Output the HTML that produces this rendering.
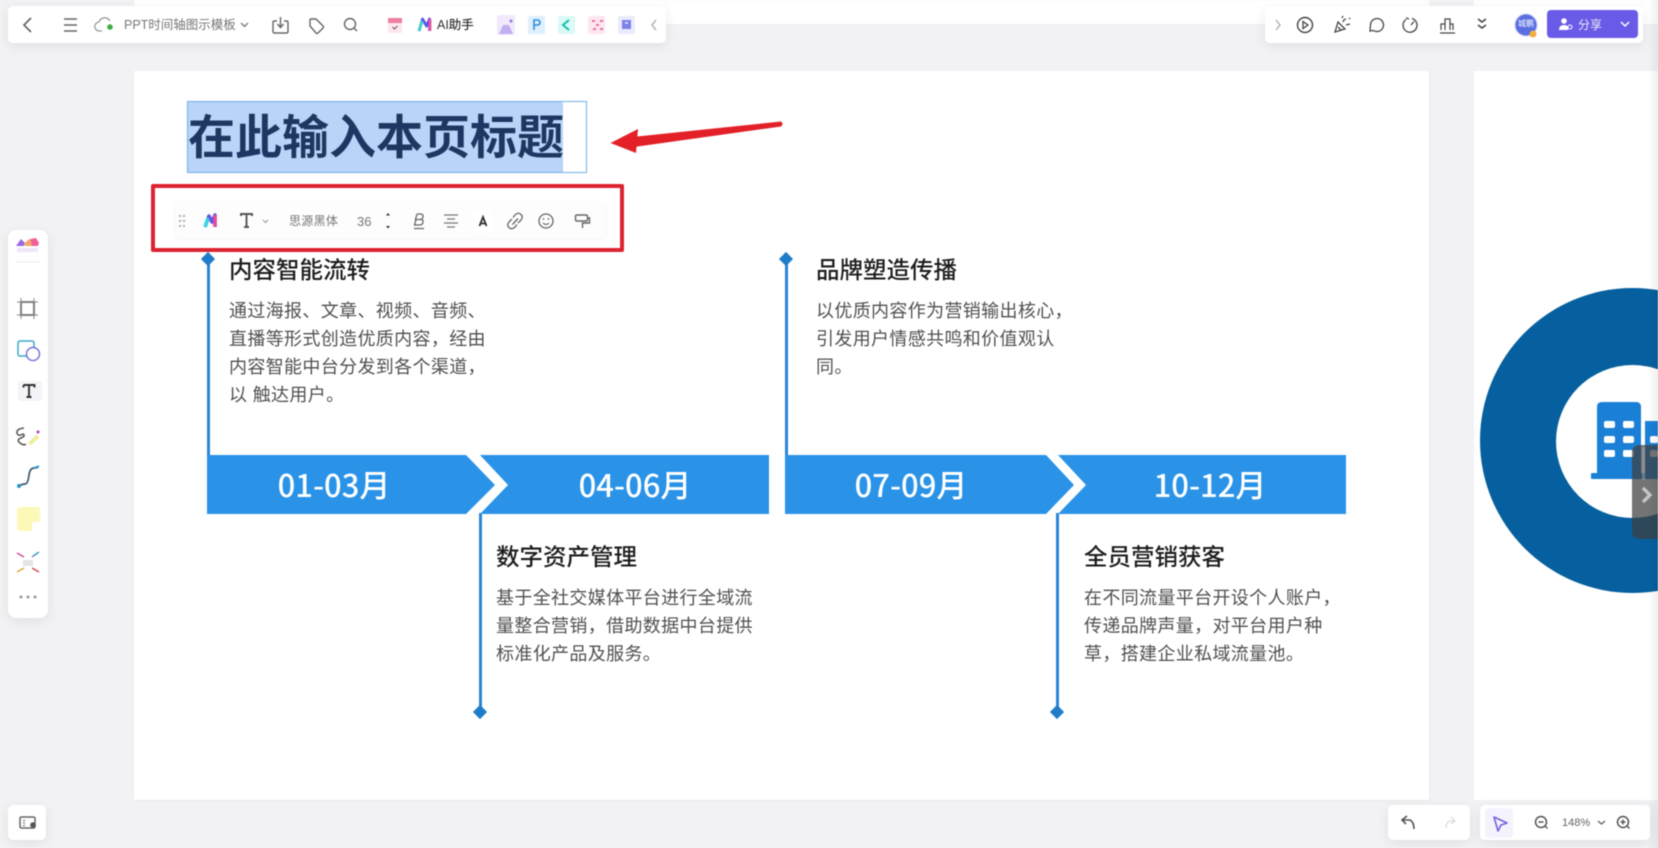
<!DOCTYPE html>
<html lang="zh-CN"><head><meta charset="utf-8"><title>PPT时间轴图示模板</title>
<style>
*{box-sizing:border-box}
html,body{margin:0;padding:0;background:#f2f2f5}
body{width:1658px;height:848px;overflow:hidden;position:relative;font-family:"Liberation Sans","Noto Sans CJK SC",sans-serif}
#w{position:absolute;left:0;top:0;width:1658px;height:848px;overflow:hidden;background:#f2f2f5;filter:blur(.45px)}
.a{position:absolute}
.t{position:absolute;white-space:nowrap;line-height:1}
.panel{position:absolute;background:#fff;border-radius:5px;box-shadow:0 3px 12px rgba(0,0,0,.08)}
svg{position:absolute;overflow:visible;fill:none}
.h{position:absolute;white-space:nowrap;font-size:23.5px;line-height:30px;font-weight:500;color:#1c1c1c}
.b{position:absolute;white-space:nowrap;font-size:18px;line-height:28px;letter-spacing:.35px;color:#505050}
.lab{position:absolute;top:464px;width:200px;text-align:center;color:#fff;font-family:"Noto Sans CJK SC",sans-serif;font-size:31px;line-height:40px;font-weight:500}
.ln{position:absolute;width:2.5px;background:#2a85d8}
.d{position:absolute;width:10px;height:10px;background:#1f7cc9;transform:rotate(45deg)}
</style></head><body><div id="w">
<div class="a" style="left:134px;top:0;width:1295px;height:24px;background:#fff"></div>
<div class="a" style="left:1474px;top:0;width:184px;height:24px;background:#fff"></div>
<div class="a" style="left:134px;top:71px;width:1295px;height:729px;background:#fff;box-shadow:0 1px 3px rgba(0,0,0,.05)"></div>
<div class="a" style="left:1474px;top:71px;width:184px;height:729px;background:#fff"></div>

<!-- right slide circle -->
<div class="a" style="left:1480px;top:288px;width:305px;height:305px;border-radius:50%;background:#06609f"></div>
<div class="a" style="left:1556px;top:365px;width:153px;height:153px;border-radius:50%;background:#fff"></div>
<svg style="left:0;top:0" width="1658" height="848">
<path d="M1597 476V407q0-5 5-5h34q5 0 5 5v69z" fill="#1a80d6"/>
<path d="M1645 421h13v58h-13z" fill="#1a80d6"/>
<rect x="1591" y="473" width="67" height="6" rx="1" fill="#1a80d6"/>
<g fill="#fff"><rect x="1604" y="421" width="11" height="7" rx="2"/><rect x="1623" y="421" width="11" height="7" rx="2"/><rect x="1604" y="436" width="11" height="7" rx="2"/><rect x="1623" y="436" width="11" height="7" rx="2"/><rect x="1604" y="450" width="11" height="7" rx="2"/><rect x="1623" y="450" width="11" height="7" rx="2"/><rect x="1650" y="436" width="8" height="7" rx="2"/><rect x="1650" y="450" width="8" height="7" rx="2"/></g>
</svg>
<div class="a" style="left:1632px;top:445px;width:26px;height:94px;border-radius:7px 0 0 7px;background:rgba(62,62,62,.72)"></div>
<div class="a" style="left:1642px;top:447px;width:3px;height:33px;background:rgba(180,180,180,.45)"></div>
<svg style="left:1640px;top:486px" width="14" height="18"><path d="M3 2l7 7-7 7" stroke="#c4c4c4" stroke-width="3.4"/></svg>
<div class="a" style="left:1648px;top:0;width:10px;height:848px;background:linear-gradient(90deg,rgba(0,0,0,0),rgba(0,0,0,.06))"></div>

<!-- title -->
<div class="a" style="left:187px;top:101px;width:400px;height:72px;border:1px solid #6fb0e4;background:#fff"></div>
<div class="a" style="left:188px;top:102px;width:375px;height:70px;background:#b9d4f8"></div>
<div class="t" style="left:188px;top:114px;font-size:47px;font-weight:700;color:#1d3762;width:375px;letter-spacing:0;line-height:48px">在此输入本页标题</div>

<!-- arrow -->
<svg style="left:0;top:0" width="1658" height="848">
<path d="M781 121.500Q784 124 781 126.500L634 147 632 137z" fill="#e32028"/>
<path d="M610.500 143L638 129 636 153z" fill="#e32028"/>
</svg>

<!-- floating toolbar -->
<div class="a" style="left:176px;top:202px;width:429px;height:36px;background:#fdfdfd;box-shadow:0 1px 6px rgba(0,0,0,.05);border-radius:4px"></div>
<div class="a" style="left:151px;top:183.500px;width:473px;height:68px;border:4px solid #dc2330;border-radius:2px"></div>
<svg style="left:0;top:0" width="1658" height="848">
<g fill="#b5b5b5"><circle cx="180" cy="216" r="1.200"/><circle cx="184" cy="216" r="1.200"/><circle cx="180" cy="221" r="1.200"/><circle cx="184" cy="221" r="1.200"/><circle cx="180" cy="226" r="1.200"/><circle cx="184" cy="226" r="1.200"/></g>
<path d="M205 227l4-11 3 6 3-7v12" stroke="#5b56e6" stroke-width="3.500" stroke-linejoin="round"/><path d="M205 227l3-9" stroke="#38d6e6" stroke-width="3.500"/><path d="M215 215v12" stroke="#e84a9c" stroke-width="3.500"/>
<path d="M241 216v-2h11v2M246.500 214v13M244 227h5" stroke="#555" stroke-width="1.900"/>
<path d="M263 220l2.500 2.500 2.500-2.500" stroke="#999" stroke-width="1.100"/>
<path d="M386 215.500l2-2.500 2 2.500z" fill="#333"/><path d="M386 226l2 2.500 2-2.500z" fill="#333"/>
<path d="M417 214h3.500q3 0 2.500 2.800t-3 2.700h-4.500l1.500-5.500M416 219.500h4.500q3 0 2.500 2.800t-3.500 2.700h-5l1.500-5.500M414 228.500h10" stroke="#666" stroke-width="1.300"/>
<path d="M444 215h14M447 219h8M444 223h14M447 227h8" stroke="#777" stroke-width="1.300"/>
<rect x="473" y="210" width="20" height="22" rx="2" fill="#fff"/>
<path d="M479.500 226l3.500-9 3.500 9M481 223.500h4" stroke="#333" stroke-width="1.800"/>
<path d="M512 219l-3 3q-2.500 3 0 5.500t5.500 0l2.500-3M518 223l3-3q2.500-3 0-5.500t-5.500 0l-2.500 3M512.500 224.500l5.500-6" stroke="#666" stroke-width="1.300"/>
<circle cx="546" cy="221" r="7" stroke="#666" stroke-width="1.300"/><path d="M543 223q3 3 6 0" stroke="#666" stroke-width="1.200"/><circle cx="543.500" cy="219" r=".9" fill="#666"/><circle cx="548.500" cy="219" r=".9" fill="#666"/>
<path d="M577 215h9q1.500 0 1.500 1.500v3q0 1.500-1.500 1.500h-9q-1.500 0-1.500-1.500v-3q0-1.500 1.500-1.500zM587.500 218h2v5h-7v5" stroke="#666" stroke-width="1.400"/>
</svg>
<div class="t" style="left:289px;top:214.500px;font-size:12px;color:#777;letter-spacing:.3px">思源黑体</div>
<div class="t" style="left:357px;top:214.500px;font-size:13px;color:#777">36</div>

<!-- timeline lines -->
<div class="ln" style="left:207px;top:259px;height:196px"></div>
<div class="ln" style="left:785px;top:259px;height:196px"></div>
<div class="ln" style="left:479px;top:513px;height:199px"></div>
<div class="ln" style="left:1056px;top:513px;height:199px"></div>
<div class="d" style="left:203px;top:254px"></div>
<div class="d" style="left:781px;top:254px"></div>
<div class="d" style="left:475px;top:707px"></div>
<div class="d" style="left:1052px;top:707px"></div>

<!-- timeline bars -->
<svg style="left:0;top:0" width="1658" height="848">
<path d="M207 455H466L495 485 466 514H207z" fill="#2a93e8"/>
<path d="M480 455H769V514H480L508 485z" fill="#2a93e8"/>
<path d="M785 455H1046L1074 485 1046 514H785z" fill="#2a93e8"/>
<path d="M1058 455H1346V514H1058L1086 485z" fill="#2a93e8"/>
</svg>
<div class="lab" style="left:234px">01-03月</div>
<div class="lab" style="left:535px">04-06月</div>
<div class="lab" style="left:811px">07-09月</div>
<div class="lab" style="left:1110px">10-12月</div>

<!-- content -->
<div class="h" style="left:229px;top:255px">内容智能流转</div>
<div class="b" style="left:229px;top:297px">通过海报、文章、视频、音频、<br>直播等形式创造优质内容，经由<br>内容智能中台分发到各个渠道，<br>以 触达用户。</div>
<div class="h" style="left:816px;top:255px">品牌塑造传播</div>
<div class="b" style="left:816px;top:297px">以优质内容作为营销输出核心，<br>引发用户情感共鸣和价值观认<br>同。</div>
<div class="h" style="left:496px;top:542px">数字资产管理</div>
<div class="b" style="left:496px;top:584px">基于全社交媒体平台进行全域流<br>量整合营销，借助数据中台提供<br>标准化产品及服务。</div>
<div class="h" style="left:1084px;top:542px">全员营销获客</div>
<div class="b" style="left:1084px;top:584px">在不同流量平台开设个人账户，<br>传递品牌声量，对平台用户种<br>草，搭建企业私域流量池。</div>

<!-- top left toolbar -->
<div class="panel" style="left:8px;top:6px;width:658px;height:37px"></div>
<svg style="left:0;top:0" width="1658" height="848">
<path d="M31 18l-7 7 7 7" stroke="#666" stroke-width="1.700"/>
<path d="M64 19h13M64 25h13M64 31h13" stroke="#666" stroke-width="1.600"/>
<path d="M102 31h-2.500a4.500 4.500 0 0 1-.5-9 6 6 0 0 1 11-1" stroke="#999" stroke-width="1.300"/><circle cx="110" cy="27" r="2.800" fill="#3fae3f"/>
<path d="M241 23l3.500 3.500 3.500-3.500" stroke="#777" stroke-width="1.300"/>
<path d="M277 21h-2.500q-1.500 0-1.500 1.500v9q0 1.500 1.500 1.500h12q1.500 0 1.500-1.500v-9q0-1.500-1.500-1.500H284M280.500 17v10M277.500 24l3 3.500 3-3.500" stroke="#666" stroke-width="1.400"/>
<path d="M311 19h5l7 7q1 1 0 2l-5 5q-1 1-2 0l-6-7v-5.500q0-1.500 1-1.500z" stroke="#666" stroke-width="1.400"/>
<circle cx="350" cy="24" r="5.500" stroke="#666" stroke-width="1.400"/><path d="M354 28l3 3" stroke="#666" stroke-width="1.400"/>
<rect x="388" y="18" width="14" height="15" rx="2" fill="#fde6ee"/><rect x="388" y="18" width="14" height="5" fill="#ef7d9e"/><path d="M392.500 27l2 2 3-3" stroke="#666" stroke-width="1.100"/>
<path d="M419 31l3.500-12 4 7 3-7 0 12" stroke="#5b56e6" stroke-width="2.800" stroke-linejoin="round"/><path d="M419 31l3-10" stroke="#38d6c6" stroke-width="2.800"/><path d="M430 19v12" stroke="#e854a4" stroke-width="2.800"/>
<rect x="497" y="15" width="18" height="20" rx="2" fill="#f0eafc"/><path d="M499 34l4-9h6l4 9z" fill="#c4aef2"/><circle cx="511" cy="21" r="1.500" fill="#9a78e0"/>
<rect x="528" y="16" width="17" height="18" rx="2" fill="#dff0fc"/><path d="M534 30V20h3q3 0 3 2.500T537 25h-3" stroke="#2c8fdc" stroke-width="1.600"/>
<rect x="558" y="16" width="17" height="18" rx="2" fill="#dbf9f5"/><path d="M569 20l-6 5 6 5" stroke="#12c2b2" stroke-width="2"/>
<rect x="588" y="16" width="17" height="18" rx="2" fill="#fde6ef"/><path d="M592 21h3M600 21h3M596 25h3M593 29h3M600 29h3" stroke="#ea5f92" stroke-width="1.700"/>
<rect x="618" y="16" width="17" height="18" rx="2" fill="#e9ecfc"/><rect x="622" y="20" width="9" height="9" fill="#7d82e8"/><path d="M625 23h3" stroke="#fff" stroke-width="1.200"/>
<path d="M656 20l-4 5 4 5" stroke="#aaa" stroke-width="1.400"/>
</svg>
<div class="t" style="left:124px;top:18px;font-size:12.500px;color:#777;line-height:15px">PPT时间轴图示模板</div>
<div class="t" style="left:437px;top:18px;font-size:12.500px;color:#333;font-weight:500;line-height:15px">AI助手</div>

<!-- top right toolbar -->
<div class="panel" style="left:1265px;top:6px;width:378px;height:37px"></div>
<svg style="left:0;top:0" width="1658" height="848">
<path d="M1276 20l4 5-4 5" stroke="#aaa" stroke-width="1.300"/>
<circle cx="1305" cy="25" r="7.500" stroke="#444" stroke-width="1.400"/><path d="M1303 21.500v7l5-3.500z" stroke="#444" stroke-width="1.300"/>
<path d="M1335 32l3-10 7 7zM1338 27l3 3M1343 22q1-3 3-3M1346 25l4-1M1342 18l1-2M1349 19l1-1" stroke="#444" stroke-width="1.300"/>
<path d="M1370 31l.5-6a6.500 6.500 0 1 1 3 5.500z" stroke="#444" stroke-width="1.300"/>
<path d="M1406 19.500a7 7 0 1 0 6-1M1411 25l3-3.500M1406 18l3 1" stroke="#444" stroke-width="1.300"/>
<path d="M1441 30v-6h4v6M1445 30V19h5v11M1450 30v-6h3v6M1440 33h15" stroke="#444" stroke-width="1.200"/>
<path d="M1478 19l4 3 4-3M1478 25l4 3 4-3" stroke="#444" stroke-width="1.500"/>
<circle cx="1526" cy="25" r="11" fill="#5c6fe0" stroke="#c8cdf5" stroke-width="1"/>
<circle cx="1533" cy="34" r="3.500" fill="#f0b040"/>
<rect x="1547" y="10" width="91" height="28" rx="4" fill="#6a5ae8"/>
<circle cx="1564" cy="21" r="2.800" fill="#fff"/><path d="M1559 30q0-5 5-5t4 5z" fill="#fff"/><circle cx="1570" cy="27" r="2" stroke="#fff" stroke-width="1"/>
<path d="M1621 22l4 4 4-4" stroke="#fff" stroke-width="1.500"/>
</svg>
<div class="t" style="left:1518px;top:20px;font-size:8px;color:#fff">城鹏</div>
<div class="t" style="left:1578px;top:18px;font-size:12px;color:#eee;line-height:14px">分享</div>

<!-- left toolbar -->
<div class="panel" style="left:8px;top:230px;width:40px;height:388px;border-radius:8px"></div>
<svg style="left:0;top:0" width="1658" height="848">
<path d="M16 246l5-7 4 4-1 3z" fill="#9a6ae0"/><path d="M25 243l4-4 4 4v3h-8z" fill="#f4a860"/><path d="M30 239l6-1 3 5-1 3h-6z" fill="#ef5f9c"/>
<path d="M17 248h21v4H17z" fill="#eee6fa"/><path d="M15 262h26" stroke="#eaeaee"/>
<rect x="21" y="302" width="13" height="13" stroke="#555" stroke-width="1.800"/><path d="M17 302h21M17 315h21M21 298v21M34 298v21" stroke="#888" stroke-width="1"/>
<rect x="18" y="341" width="16" height="15" rx="2" stroke="#3fa7c8" stroke-width="1.500"/><circle cx="33" cy="354" r="6.500" stroke="#7775dc" stroke-width="1.500" fill="#fff"/>
<rect x="18" y="381" width="24" height="20" rx="2" fill="#f4f4f8"/>
<path d="M23.500 385h11v2.500M29 385v12M26.500 397h5M23.500 387.500V385" stroke="#333" stroke-width="1.900"/>
<path d="M24 428q-8 1-7 5t6 1q3 2-2 4t-1 5 6 1" stroke="#555" stroke-width="1.500"/><path d="M28 443l9-9 2 4-8 7z" fill="#f0ee9c"/><circle cx="38" cy="432" r="1.500" fill="#b040c0"/>
<path d="M19 486q3-2 6-2t4-9q1-7 5-7t4-1" stroke="#3f5a70" stroke-width="1.700"/><circle cx="19" cy="486" r="2" fill="#2a93c8"/><path d="M34 468l5-2" stroke="#38a8d8" stroke-width="2"/>
<path d="M17 511q0-4 4-4h17q2 0 2 2v13l-8 9H21q-4 0-4-4z" fill="#fbf8b8"/><path d="M40 522h-7q-1 0-1 1v8z" fill="#fff"/>
<path d="M17 553l7 4M38 553l-6 4" stroke="#c84a98" stroke-width="1.300"/><path d="M33 556l6-4" stroke="#38a8d8" stroke-width="1.400"/><path d="M17 572l7-4" stroke="#e0a040" stroke-width="1.300"/><path d="M32 568l7 4" stroke="#d04444" stroke-width="1.300"/><rect x="23" y="560" width="10" height="6" fill="#e4e4e4"/>
<g fill="#999"><circle cx="21" cy="597" r="1.500"/><circle cx="28" cy="597" r="1.500"/><circle cx="35" cy="597" r="1.500"/></g>
</svg>

<!-- bottom -->
<div class="panel" style="left:8px;top:805px;width:38px;height:35px"></div>
<div class="panel" style="left:1388px;top:805px;width:82px;height:35px"></div>
<div class="panel" style="left:1480px;top:805px;width:170px;height:35px"></div>
<div class="a" style="left:1485px;top:808px;width:28px;height:30px;background:#f4f3fd;border-radius:4px"></div>
<svg style="left:0;top:0" width="1658" height="848">
<rect x="20" y="817" width="15" height="11" rx="1.500" stroke="#666" stroke-width="1.500"/><path d="M23 820.500h2M23 823h2M23 825.500h2" stroke="#666"/><circle cx="33" cy="825" r="2.800" fill="#555"/>
<path d="M1414 829q0-7-4-9h-7M1407 816l-5 4 4 4" stroke="#555" stroke-width="1.600"/>
<path d="M1446 828q0-6 4-7h5M1451 817l4 4-4 3" stroke="#ddd" stroke-width="1.300"/>
<path d="M1494 817l13 6-6 2-3 6z" stroke="#7563e0" stroke-width="1.600" stroke-linejoin="round"/>
<circle cx="1541" cy="822" r="5.500" stroke="#555" stroke-width="1.500"/><path d="M1538.500 822h5M1545 826l2.500 2.500" stroke="#555" stroke-width="1.400"/>
<path d="M1598 821l3.500 3 3.500-3" stroke="#666" stroke-width="1.400"/>
<circle cx="1623" cy="822" r="5.500" stroke="#555" stroke-width="1.500"/><path d="M1620.500 822h5M1623 819.500v5M1627 826l2.500 2.500" stroke="#555" stroke-width="1.400"/>
</svg>
<div class="t" style="left:1562px;top:817px;font-size:11px;color:#666;line-height:13px">148%</div>
</div></body></html>
